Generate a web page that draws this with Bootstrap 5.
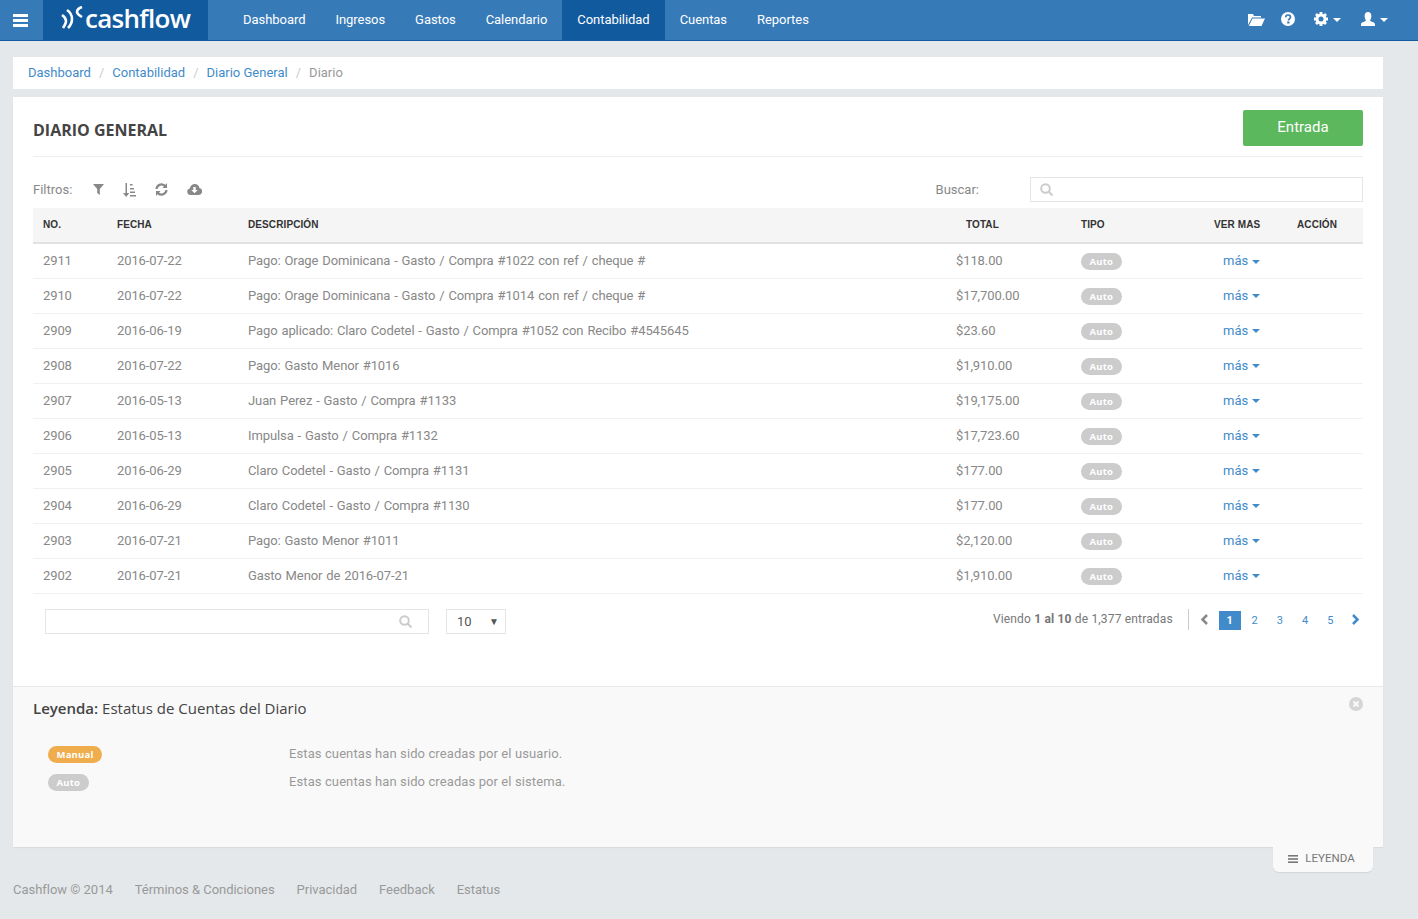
<!DOCTYPE html>
<html lang="es"><head><meta charset="utf-8"><title>Cashflow</title>
<link href="https://cdn.jsdelivr.net/npm/bootstrap@5.3.0/dist/css/bootstrap.min.css" rel="stylesheet">
<style>
body{background:#e4e8eb;font-family:Roboto,"Liberation Sans",sans-serif;font-size:13px;color:#888;min-height:919px}
a{text-decoration:none}
.topbar{height:41px;background:#377ab8;border-bottom:1px solid #125a9e;padding:0}
.burger{width:43px;height:40px;color:#fff;padding-right:2px}
.brand-box{width:165px;height:40px;background:#125a9e;color:#fff;font-family:"Open Sans",sans-serif;font-weight:600;font-size:26px;letter-spacing:-.7px;line-height:36px;padding-left:18px;gap:2px}
.topnav{margin-left:20px}
.topnav a{display:block;color:#fff;height:40px;line-height:39px;padding:0 15px;font-size:13px;letter-spacing:-.05px}
.topnav a.on{background:#125a9e}
.topicons{margin-left:auto;padding-right:30px;color:#fff;gap:0}
.caret-x{display:inline-block;border-top:4px solid currentColor;border-left:4px solid transparent;border-right:4px solid transparent;vertical-align:middle}
.shell{padding:16px 35px 0 13px}
.crumbs{background:#fff;height:32px;padding:0 15px 1px;margin:0 0 8px;font-size:13px;letter-spacing:0;align-items:center;--bs-breadcrumb-divider-color:#ccc;--bs-breadcrumb-item-active-color:#999;--bs-breadcrumb-item-padding-x:8px}
.crumbs a{color:#428bca}
.panel-main{background:#fff;box-shadow:0 1px 1px rgba(0,0,0,.05);height:750px;display:flex;flex-direction:column}
.panel-top{padding:0 20px}
.head-row{height:60px;border-bottom:1px solid #eee;align-items:center}
.head-row h1{font-family:"Open Sans",sans-serif;font-size:16px;font-weight:700;color:#444;margin:0;padding-top:9px}
.btn-in{background:#5cb85c;color:#fff;width:120px;height:36px;border:0;border-radius:2px;font-size:15px;padding:0 0 2px;margin-top:3px}
.filter-row{height:51px;align-items:center;color:#888;padding-top:14px}
.filter-row .lbl{width:60px}
.filter-row svg{display:block}
.srch{width:333px;height:25px;border:1px solid #e5e5e5;margin-left:51px;padding-left:9px}
.grid-t{table-layout:fixed;width:1330px;margin:0;font-size:13px;letter-spacing:-.1px;word-spacing:.8px;--bs-table-color:#888;--bs-table-border-color:#f1f1f1}
.grid-t th{background:#f5f5f5;color:#333;font-size:10px;height:35px;padding:0 10px 2px;border-bottom:2px solid #e2e2e2;letter-spacing:.1px;word-spacing:0;vertical-align:middle;font-family:"Liberation Sans",sans-serif;font-weight:700}
.grid-t td{height:35px;padding:0 10px;vertical-align:middle;color:#888;border-bottom:1px solid #f1f1f1}
.pill-x{display:inline-block;background:#ccc;color:#fff;font-size:9.5px;font-weight:700;font-family:"Open Sans",sans-serif;border-radius:9px;height:17px;line-height:17px;padding:0 8.5px;letter-spacing:.2px;word-spacing:0;vertical-align:middle}
.pill-o{background:#f0ad4e}
.mas-a{color:#428bca;margin-left:9px;letter-spacing:0;word-spacing:0}
.mas-a .caret-x{margin-left:1px}
.tools{padding:15px 12px 0;height:92px}
.box-s{width:384px;height:25px;border:1px solid #e5e5e5;padding-right:16px}
.sel-b{width:60px;height:25px;border:1px solid #e5e5e5;margin-left:17px;padding:1px 6px 0 10px;color:#555}
.tri{font-size:10px;color:#555}
.info-x{margin-left:auto;font-size:12px;letter-spacing:.17px;color:#777;padding-right:15px;border-right:1px solid #ccc;height:21px;line-height:21px}
.info-x b{font-weight:700;color:#777}
.pager-x{gap:0;margin:2px -17px 0 0;padding:0 0 0 3px;align-items:center;list-style:none}
.pager-x li{width:25.2px;text-align:center;font-size:11px;color:#428bca;height:19px;line-height:19px}
.pager-x li.on{width:22px;margin:0 1.5px;background:#428bca;color:#fff;font-weight:700}
.pager-x svg{display:inline-block;vertical-align:-1px}
.legend-x{flex:1;background:#f9f9f9;border-top:1px solid #e8e8e8;padding:0 20px;position:relative}
.legend-x h2{font-family:"Open Sans",sans-serif;font-size:15px;font-weight:400;color:#444;margin:11px 0 0;line-height:20px}
.legend-x h2 b{font-weight:600}
.leg-rows{margin-top:22px;font-size:13px;letter-spacing:.1px;color:#999}
.leg-row{height:28px;align-items:center;padding-left:15px}
.leg-row span.cell1{width:241px}
.close-x{position:absolute;right:20px;top:10px;line-height:0}
.tab-x{position:absolute;right:10px;top:0;width:100px;height:25px;background:#f9f9f9;border-radius:0 0 6px 6px;box-shadow:0 1px 1px rgba(0,0,0,.08);font-size:11.5px;color:#777;gap:7px;padding:0 3px 2px 0}
.foot-wrap{position:relative;padding-right:0}
.foot-x{gap:22px;padding-top:33px;color:#999;font-size:13px;letter-spacing:-.03px}
.foot-x a{color:#999}
</style></head><body>
<nav class="topbar d-flex align-items-start">
  <a class="burger d-flex align-items-center justify-content-center" href="#" aria-label="menu"><svg width="15" height="13" viewBox="0 0 15 13" fill="#fff"><rect y="0" width="15" height="3"/><rect y="5" width="15" height="3"/><rect y="10" width="15" height="3"/></svg></a>
  <a class="brand-box d-flex" href="#"><svg width="22" height="24" viewBox="0 0 22 24" fill="none" stroke="#fff" stroke-width="2.600" style="margin-top:6px;flex:none"><path d="M1 9c3 2 4 4 4 6s-1 4-3 7"/><path d="M6 4c3 2 5 5 5 9s-1 6-4 9"/><path d="M21 1c-3 1-5 3-5 5s2 3 5 5"/></svg><span>cashflow</span></a>
  <div class="topnav d-flex">
    <a href="#">Dashboard</a><a href="#">Ingresos</a><a href="#">Gastos</a><a href="#">Calendario</a><a href="#" class="on">Contabilidad</a><a href="#">Cuentas</a><a href="#">Reportes</a>
  </div>
  <div class="topicons d-flex align-items-center" style="height:38px">
    <svg width="17" height="13" viewBox="0 0 17 13" fill="#fff" style="margin-right:16px"><path d="M0 12V1h5l1 2h7v1.500H4L0 12zM4.500 5.500H17L13.500 13H.8z"/></svg>
    <svg width="14" height="14" viewBox="0 0 14 14" style="margin-right:19px"><circle cx="7" cy="7" r="7" fill="#fff"/><path d="M4.700 5.300c0-3 4.800-3 4.800-.2 0 1.700-2 1.700-2 3.300" fill="none" stroke="#377ab8" stroke-width="1.700"/><rect x="6.200" y="9.500" width="2.300" height="2" fill="#377ab8"/></svg>
    <svg width="14" height="14" viewBox="0 0 14 14" style="margin-right:5px"><circle cx="7" cy="7" r="4" fill="none" stroke="#fff" stroke-width="3"/><g stroke="#fff" stroke-width="2.800"><path d="M7 0v3M7 11v3M0 7h3M11 7h3M2 2l2 2M10 10l2 2M12 2l-2 2M4 10l-2 2"/></g></svg>
    <span class="caret-x" style="margin-right:20px;margin-top:2px"></span>
    <svg width="14" height="14" viewBox="0 0 14 14" fill="#fff" style="margin-right:5px"><path d="M7 0c2.300 0 3.400 1.800 3.400 4S9.200 8 9 8.500c0 1 4.700 1.500 5 3.500v2H0v-2c.3-2 5-2.500 5-3.500C4.800 8 3.600 6.200 3.600 4S4.700 0 7 0z"/></svg>
    <span class="caret-x" style="margin-top:2px"></span>
  </div>
</nav>
<div class="shell">
  <ol class="breadcrumb crumbs d-flex">
    <li class="breadcrumb-item"><a href="#">Dashboard</a></li>
    <li class="breadcrumb-item"><a href="#">Contabilidad</a></li>
    <li class="breadcrumb-item"><a href="#">Diario General</a></li>
    <li class="breadcrumb-item active">Diario</li>
  </ol>
  <div class="panel-main">
    <div class="panel-top">
      <div class="head-row d-flex justify-content-between"><h1>DIARIO GENERAL</h1><button class="btn btn-in">Entrada</button></div>
      <div class="filter-row d-flex">
        <span class="lbl">Filtros:</span>
        <svg width="11" height="11" viewBox="0 0 11 11" fill="#888" style="margin-right:20px"><path d="M0 0h11L6.800 5v6L4.200 9V5z"/></svg>
        <svg width="13" height="14" viewBox="0 0 13 14" fill="#888" style="margin-right:19px;margin-left:-1px"><path d="M2.500 0H4v10h2.300L3.200 14 0 10h2.500z"/><path d="M7 1h2.500v1.500H7zM7 5h4v1.500H7zM7 8.500h5V10H7zM7 12h6v1.500H7z"/></svg>
        <svg width="13" height="13" viewBox="0 0 13 13" fill="none" stroke="#888" stroke-width="2.200" style="margin-right:19px"><path d="M1.500 6a5 5 0 0 1 9-2.500M11.500 7a5 5 0 0 1-9 2.500"/><path d="M12 0v5H7.500zM1 13V8h4.500z" fill="#888" stroke="none"/></svg>
        <svg width="15" height="11" viewBox="0 0 15 11"><path d="M3.500 11a3.300 3.300 0 0 1-.8-6.500C3.200 1.800 5.400 0 7.800 0c2.300 0 4.200 1.600 4.600 3.900A3.600 3.600 0 0 1 11.500 11z" fill="#888"/><path d="M6.300 3h2.400v3h2L7.500 9.300 4.300 6h2z" fill="#fff"/></svg>
        <span class="ms-auto" style="color:#888">Buscar:</span>
        <div class="srch d-flex align-items-center"><svg width="13" height="13" viewBox="0 0 13 13" fill="none" stroke="#ccc" stroke-width="2"><circle cx="5.500" cy="5.500" r="4.300"/><path d="M8.500 8.500l4 4"/></svg></div>
      </div>
      <table class="table grid-t">
        <colgroup><col style="width:74px"><col style="width:131px"><col style="width:708px"><col style="width:125px"><col style="width:133px"><col style="width:83px"><col style="width:76px"></colgroup>
        <thead><tr><th>NO.</th><th>FECHA</th><th>DESCRIPCIÓN</th><th style="padding-left:20px">TOTAL</th><th>TIPO</th><th>VER MAS</th><th>ACCIÓN</th></tr></thead>
        <tbody>
          <tr><td>2911</td><td>2016-07-22</td><td>Pago: Orage Dominicana - Gasto / Compra #1022 con ref / cheque #</td><td>$118.00</td><td><span class="pill-x">Auto</span></td><td><a class="mas-a" href="#">más <span class="caret-x"></span></a></td><td></td></tr>
          <tr><td>2910</td><td>2016-07-22</td><td>Pago: Orage Dominicana - Gasto / Compra #1014 con ref / cheque #</td><td>$17,700.00</td><td><span class="pill-x">Auto</span></td><td><a class="mas-a" href="#">más <span class="caret-x"></span></a></td><td></td></tr>
          <tr><td>2909</td><td>2016-06-19</td><td>Pago aplicado: Claro Codetel - Gasto / Compra #1052 con Recibo #4545645</td><td>$23.60</td><td><span class="pill-x">Auto</span></td><td><a class="mas-a" href="#">más <span class="caret-x"></span></a></td><td></td></tr>
          <tr><td>2908</td><td>2016-07-22</td><td>Pago: Gasto Menor #1016</td><td>$1,910.00</td><td><span class="pill-x">Auto</span></td><td><a class="mas-a" href="#">más <span class="caret-x"></span></a></td><td></td></tr>
          <tr><td>2907</td><td>2016-05-13</td><td>Juan Perez - Gasto / Compra #1133</td><td>$19,175.00</td><td><span class="pill-x">Auto</span></td><td><a class="mas-a" href="#">más <span class="caret-x"></span></a></td><td></td></tr>
          <tr><td>2906</td><td>2016-05-13</td><td>Impulsa - Gasto / Compra #1132</td><td>$17,723.60</td><td><span class="pill-x">Auto</span></td><td><a class="mas-a" href="#">más <span class="caret-x"></span></a></td><td></td></tr>
          <tr><td>2905</td><td>2016-06-29</td><td>Claro Codetel - Gasto / Compra #1131</td><td>$177.00</td><td><span class="pill-x">Auto</span></td><td><a class="mas-a" href="#">más <span class="caret-x"></span></a></td><td></td></tr>
          <tr><td>2904</td><td>2016-06-29</td><td>Claro Codetel - Gasto / Compra #1130</td><td>$177.00</td><td><span class="pill-x">Auto</span></td><td><a class="mas-a" href="#">más <span class="caret-x"></span></a></td><td></td></tr>
          <tr><td>2903</td><td>2016-07-21</td><td>Pago: Gasto Menor #1011</td><td>$2,120.00</td><td><span class="pill-x">Auto</span></td><td><a class="mas-a" href="#">más <span class="caret-x"></span></a></td><td></td></tr>
          <tr><td>2902</td><td>2016-07-21</td><td>Gasto Menor de 2016-07-21</td><td>$1,910.00</td><td><span class="pill-x">Auto</span></td><td><a class="mas-a" href="#">más <span class="caret-x"></span></a></td><td></td></tr>
        </tbody>
      </table>
      <div class="tools d-flex align-items-start">
        <div class="box-s d-flex align-items-center justify-content-end"><svg width="13" height="13" viewBox="0 0 13 13" fill="none" stroke="#ccc" stroke-width="2"><circle cx="5.500" cy="5.500" r="4.300"/><path d="M8.500 8.500l4 4"/></svg></div>
        <div class="sel-b d-flex align-items-center justify-content-between"><span>10</span><span class="tri">▼</span></div>
        <div class="info-x">Viendo <b>1 al 10</b> de 1,377 entradas</div>
        <ul class="pager-x d-flex">
          <li><svg width="9" height="11" viewBox="0 0 9 11" fill="none" stroke="#888" stroke-width="2.500"><path d="M7 1L2.500 5.500 7 10"/></svg></li>
          <li class="on">1</li><li>2</li><li>3</li><li>4</li><li>5</li>
          <li><svg width="9" height="11" viewBox="0 0 9 11" fill="none" stroke="#428bca" stroke-width="2.500"><path d="M2 1l4.500 4.500L2 10"/></svg></li>
        </ul>
      </div>
    </div>
    <div class="legend-x">
      <h2><b>Leyenda:</b> Estatus de Cuentas del Diario</h2>
      <a class="close-x" href="#" aria-label="cerrar"><svg width="14" height="14" viewBox="0 0 14 14"><circle cx="7" cy="7" r="7" fill="#d5d5d5"/><path d="M4.500 4.500l5 5M9.500 4.500l-5 5" stroke="#f9f9f9" stroke-width="2"/></svg></a>
      <div class="leg-rows">
        <div class="leg-row d-flex"><span class="cell1"><span class="pill-x pill-o">Manual</span></span><span>Estas cuentas han sido creadas por el usuario.</span></div>
        <div class="leg-row d-flex"><span class="cell1"><span class="pill-x">Auto</span></span><span>Estas cuentas han sido creadas por el sistema.</span></div>
      </div>
    </div>
  </div>
  <div class="foot-wrap">
    <a class="tab-x d-flex align-items-center justify-content-center" href="#"><svg width="10" height="8" viewBox="0 0 10 8" fill="#777"><rect width="10" height="1.600"/><rect y="3.200" width="10" height="1.600"/><rect y="6.400" width="10" height="1.600"/></svg>LEYENDA</a>
    <div class="foot-x d-flex"><span>Cashflow © 2014</span><a href="#">Términos &amp; Condiciones</a><a href="#">Privacidad</a><a href="#">Feedback</a><a href="#">Estatus</a></div>
  </div>
</div>
<script src="https://cdn.jsdelivr.net/npm/bootstrap@5.3.0/dist/js/bootstrap.bundle.min.js"></script>
</body></html>
